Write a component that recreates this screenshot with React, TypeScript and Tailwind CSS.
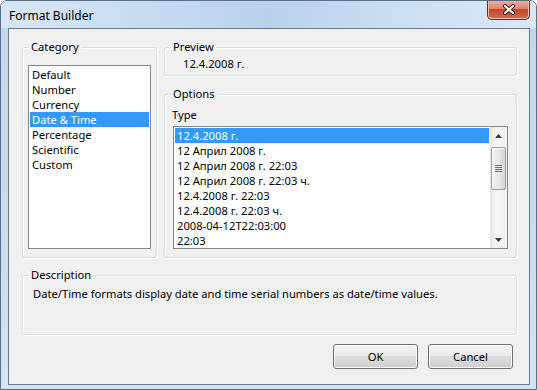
import type { ReactNode } from 'react'

const categories = ['Default', 'Number', 'Currency', 'Date & Time', 'Percentage', 'Scientific', 'Custom']

const types = [
  '12.4.2008 г.',
  '12 Април 2008 г.',
  '12 Април 2008 г. 22:03',
  '12 Април 2008 г. 22:03 ч.',
  '12.4.2008 г. 22:03',
  '12.4.2008 г. 22:03 ч.',
  '2008-04-12T22:03:00',
  '22:03',
]

function Group({ label, className, children }: { label: string; className: string; children?: ReactNode }) {
  return (
    <div
      className={`relative rounded-[3px] border border-[#d5dfe5] shadow-[inset_1px_1px_0_#ffffff,1px_1px_0_#ffffff] ${className}`}
    >
      <span className="absolute left-[6px] top-[-9px] bg-[#f0f0f0] px-[2px] leading-[15px]">{label}</span>
      {children}
    </div>
  )
}

function Arrow({ down }: { down?: boolean }) {
  return (
    <div className="flex h-[17px] items-center justify-center">
      <svg width="7" height="4" viewBox="0 0 7 4">
        <path d={down ? 'M0 0H7L3.5 4Z' : 'M0 4H7L3.5 0Z'} fill="#3b3b3b" />
      </svg>
    </div>
  )
}

function Scrollbar() {
  return (
    <div className="flex w-[17px] flex-col bg-[linear-gradient(90deg,#e6e6e6,#f6f6f6_40%,#f2f2f2)]">
      <Arrow />
      <div className="flex-1 px-[1px] pt-[3px]">
        <div className="flex h-[43px] flex-col items-center justify-center gap-[1px] rounded-[2px] border border-[#9b9b9b] bg-[linear-gradient(90deg,#f4f4f4,#e8e8e8_50%,#d6d6d6)] shadow-[inset_1px_1px_0_#ffffff]">
          <div className="h-px w-[7px] bg-[#6f6f6f]" />
          <div className="h-px w-[7px] bg-[#6f6f6f]" />
          <div className="h-px w-[7px] bg-[#6f6f6f]" />
          <div className="h-px w-[7px] bg-[#6f6f6f]" />
        </div>
      </div>
      <Arrow down />
    </div>
  )
}

function WinButton({ children }: { children: ReactNode }) {
  return (
    <button className="h-[25px] w-[85px] rounded-[3px] border border-[#707070] bg-[linear-gradient(#f2f2f2_0%,#ebebeb_50%,#dddddd_50%,#cfcfcf_100%)] leading-[15px] text-black shadow-[inset_0_0_0_1px_#fbfbfb]">
      {children}
    </button>
  )
}

export default function App() {
  return (
    <div className="flex h-[390px] w-[537px] flex-col overflow-hidden rounded-t-[7px] border border-[#5d6e82] bg-[linear-gradient(180deg,#d4e4f5_0%,#c3d8ef_8%,#cadcf1_60%,#d3e4f6_100%)] font-['Noto_Sans',sans-serif] text-[11.2px] text-black">
      <div className="flex h-[27px] items-start justify-between bg-[linear-gradient(90deg,#d7e6f6_0%,#c6dbf1_30%,#b9d1ec_50%,#c9ddf2_70%,#dbe8f6_100%)]">
        <span className="pl-[8px] pt-[7px] text-[12px] leading-[15px]">Format Builder</span>
        <div className="mr-[6px] -mt-px flex h-[20px] w-[43px] items-center justify-center rounded-b-[5px] border border-t-0 border-[#6e2a1e] bg-[linear-gradient(#eab3a6_0%,#dc8572_45%,#c4452d_50%,#d36b4f_100%)] shadow-[inset_0_0_0_1px_#f0bfb2]">
          <svg width="14" height="11" viewBox="0 0 14 11">
            <path d="M3 2L11 9M11 2L3 9" stroke="#4a1a12" strokeWidth="4" strokeLinecap="round" />
            <path d="M3 2L11 9M11 2L3 9" stroke="#ffffff" strokeWidth="2" strokeLinecap="round" />
          </svg>
        </div>
      </div>

      <div className="ml-[7px] mr-[6px] h-[357px] border border-[#6a7a8d] bg-[#f0f0f0]">
        <div className="ml-[13px] mr-[12px] mt-[18px] flex h-[211px] gap-[7px]">
          <Group label="Category" className="w-[135px]">
            <div className="ml-[5px] mt-[17px] h-[184px] w-[123px] border border-[#828790] bg-white p-[1px]">
              {categories.map((c) => (
                <div
                  key={c}
                  className={`h-[15px] pl-[2px] leading-[15px] ${c === 'Date & Time' ? 'bg-[#3399ff] text-white' : ''}`}
                >
                  {c}
                </div>
              ))}
            </div>
          </Group>

          <div className="flex w-[353px] flex-col gap-[18px]">
            <Group label="Preview" className="h-[29px]">
              <div className="pl-[18px] pt-[8px] leading-[15px]">12.4.2008 г.</div>
            </Group>
            <Group label="Options" className="h-[164px]">
              <div className="pl-[7px] pt-[12px] leading-[15px]">Type</div>
              <div className="ml-[8px] mt-[4px] flex h-[123px] w-[335px] border border-[#828790] bg-white">
                <div className="flex-1 overflow-hidden p-[1px]">
                  {types.map((t, i) => (
                    <div
                      key={t}
                      className={`h-[15px] whitespace-nowrap pl-[2px] leading-[15px] ${i === 0 ? 'bg-[#3399ff] text-white' : ''}`}
                    >
                      {t}
                    </div>
                  ))}
                </div>
                <Scrollbar />
              </div>
            </Group>
          </div>
        </div>

        <Group label="Description" className="ml-[13px] mr-[12px] mt-[17px] h-[60px]">
          <div className="pl-[10px] pt-[10px] leading-[15px]">
            Date/Time formats display date and time serial numbers as date/time values.
          </div>
        </Group>

        <div className="mr-[16px] mt-[9px] flex justify-end gap-[10px]">
          <WinButton>OK</WinButton>
          <WinButton>Cancel</WinButton>
        </div>
      </div>
    </div>
  )
}
